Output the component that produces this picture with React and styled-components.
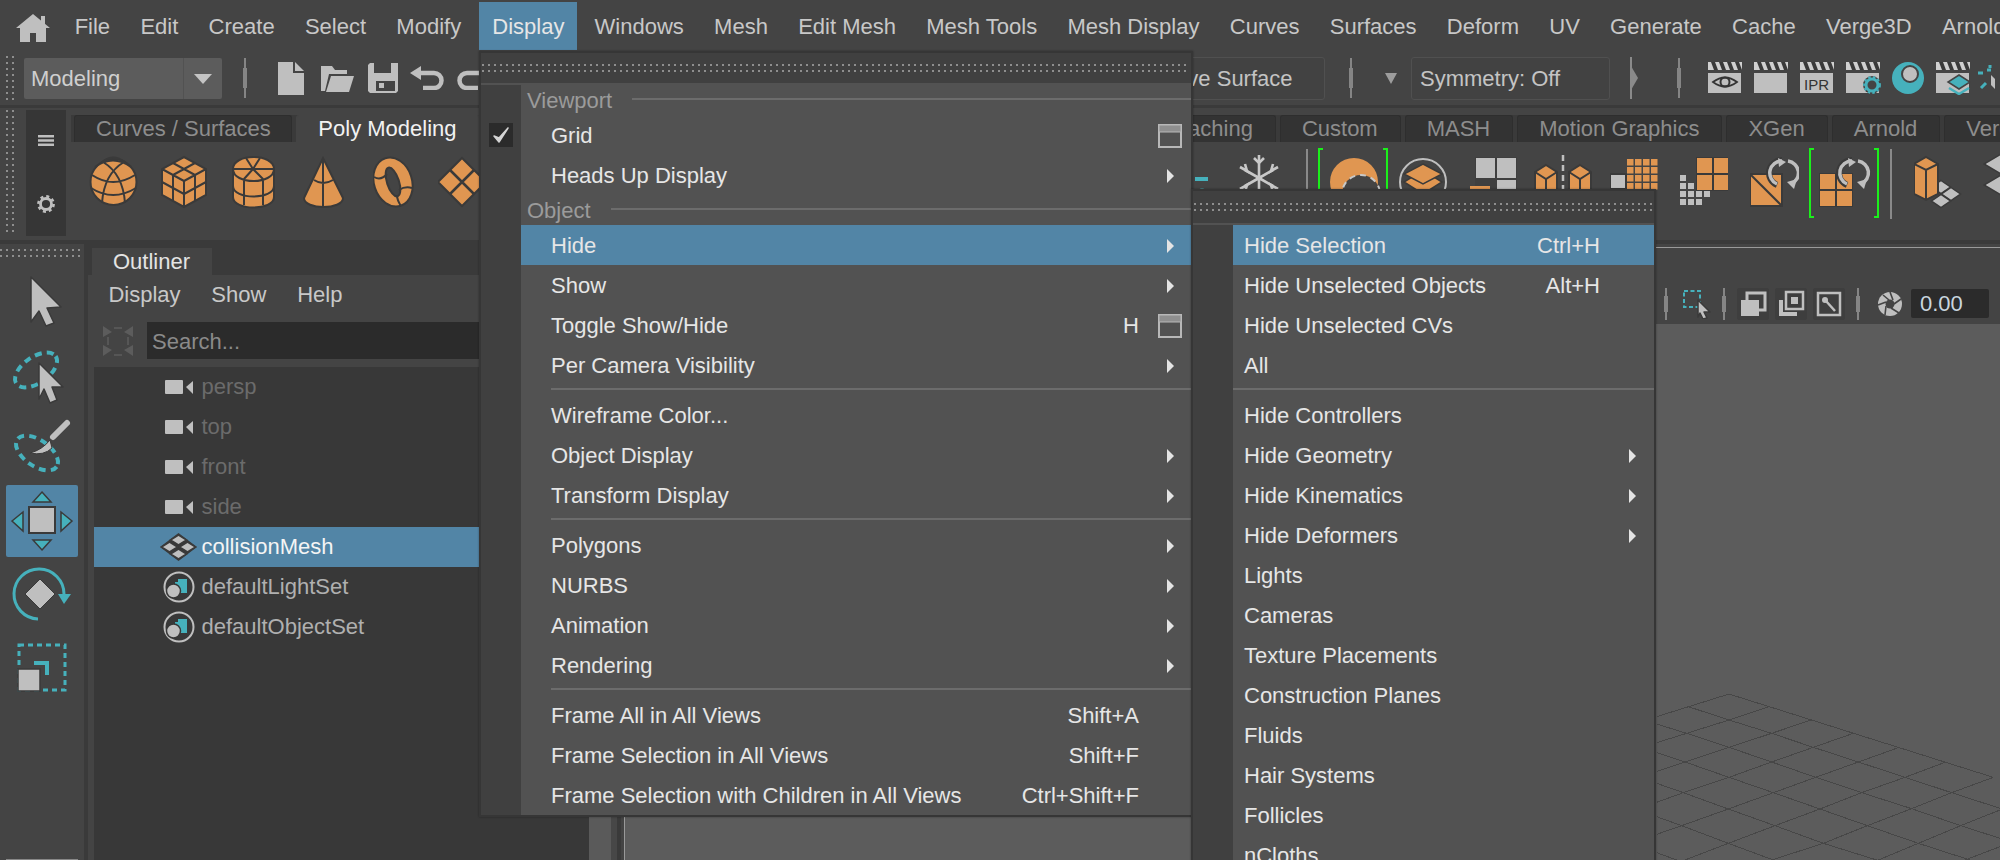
import React from 'react';
import styled, { createGlobalStyle } from 'styled-components';

const O = '#e09651', GR = '#bfbfbf', D = '#3a3a3a', T = '#46b1bc', BLUE = '#5285a6';

const Global = createGlobalStyle`
  html, body { margin: 0; padding: 0; background: #3a3a3a; }
  * { box-sizing: border-box; }
`;
const Page = styled.div`
  position: relative; width: 2000px; height: 860px; overflow: hidden;
  display: flex; flex-direction: column; background: #444;
  font: 22px/1 "Liberation Sans", Arial, sans-serif; color: #c8c8c8;
`;
const GlyphSvg = styled.svg`
  flex: none; display: block;
  margin-left: ${p => p.$ml || 0}px; margin-top: ${p => p.$mt || 0}px;
`;
const G = ({ w, h = 72, ml, mt, children }) => (
  <GlyphSvg $ml={ml} $mt={mt} width={w} height={h} viewBox={`0 0 ${w} ${h}`}>{children}</GlyphSvg>
);
const Dots = styled.div`
  flex: none;
  width: ${p => p.$w}; height: ${p => p.$h};
  margin-left: ${p => p.$ml || 0}px; margin-bottom: ${p => p.$mb || 0}px;
  background-image: radial-gradient(circle at 1px 1px, #8e8e8e 0.9px, transparent 1.1px);
  background-size: 6px 6px;
`;
const Handle = styled.div`
  flex: none; position: relative; width: 2px; height: ${p => p.$h || 40}px;
  margin-left: ${p => p.$ml || 0}px; background: #858585;
  &::before { content: ""; position: absolute; left: -1px; width: 4px; top: 25%; bottom: 25%; background: #858585; }
`;

/* ---------- menu bar ---------- */
const MenuBar = styled.div`
  height: 50px; flex: none; display: flex; align-items: stretch; padding-left: 16px; white-space: nowrap; overflow: hidden;
`;
const HomeWrap = styled.div`display: flex; align-items: flex-start; padding-top: 14px; margin-right: 9.5px;`;
const TopItem = styled.div`
  display: flex; align-items: center; padding: 4px 15.15px 0; flex: none;
  ${p => p.$active && `padding: 2px 12.5px 0 13px; margin: 2px 2.5px 0 3px; background: ${BLUE}; color: #e6e6e6;`}
`;

/* ---------- tool row ---------- */
const ToolRow = styled.div`height: 55px; flex: none; display: flex; align-items: center; white-space: nowrap;`;
const ModeBox = styled.div`
  display: flex; width: 198px; height: 41px; margin-left: 10px; margin-top: 2px; border-radius: 2px; background: #5c5c5c; overflow: hidden;
`;
const ModeLabel = styled.div`flex: 1; display: flex; align-items: center; padding-left: 7px; border-right: 1px solid #525252; color: #cfcfcf;`;
const ModeCaret = styled.div`width: 38px; display: flex; align-items: center; justify-content: center;`;
const Triangle = styled.div`
  flex: none; width: 0; height: 0; margin-left: ${p => p.$ml || 0}px;
  border-left: ${p => p.$s}px solid transparent; border-right: ${p => p.$s}px solid transparent;
  border-top: ${p => p.$t}px solid ${p => p.$c || '#c4c4c4'};
`;
const TopIcons = styled.div`flex: none; width: 243px; display: flex; align-items: center; overflow: hidden; margin-top: 1px;`;
const RightTools = styled.div`
  margin-left: auto; width: 873px; flex: none; display: flex; align-items: center; overflow: hidden; margin-top: 1px;
`;
const Field = styled.div`
  flex: none; width: ${p => p.$w}px; height: 43px; margin-left: ${p => p.$ml || 0}px;
  display: flex; align-items: center; padding: 2px 0 0 8px; border: 1px solid #505050; border-radius: 3px; color: #c4c4c4; background: #424242;
`;

/* ---------- shelf ---------- */
const Shelf = styled.div`
  height: 135px; flex: none; display: flex; border-top: 3px solid #3a3a3a; padding-top: 2px;
`;
const ShelfSide = styled.div`
  flex: none; width: 40px; height: 126px; margin-left: 12px; background: #363636;
  display: flex; flex-direction: column; align-items: center; justify-content: space-between; padding: 25px 0 23px;
`;
const ShelfMain = styled.div`flex: 1; min-width: 0; margin-left: 5px; padding-top: 5px; overflow: hidden;`;
const ShelfTabs = styled.div`
  height: 27px; display: flex; gap: 4px; padding-left: 3px; background: #3a3a3a; white-space: nowrap;
`;
const ShelfTab = styled.div`
  flex: none; display: flex; align-items: center; padding: 0 ${p => p.$pr ?? 22}px 0 21px;
  border: 1px solid ${p => (p.$active ? '#444' : '#2e2e2e')}; border-bottom: none; border-radius: 3px 3px 0 0;
  background: ${p => (p.$active ? '#444' : '#333')}; color: ${p => (p.$active ? '#f2f2f2' : '#8d8d8d')};
`;
const ShelfIcons = styled.div`display: flex; height: 98px; padding-top: 6px;`;
const ShelfLeft = styled.div`flex: none; width: 1122px; display: flex; padding-left: 18px;`;
const ShelfRight = styled.div`flex: none; width: 807px; display: flex; overflow: hidden;`;
const ShelfDivider = styled.div`
  flex: none; width: 2px; height: 70px; margin: 1px 0 0 ${p => p.$ml}px; background: #8a8a8a;
`;

/* ---------- workspace ---------- */
const Workspace = styled.div`flex: 1; min-height: 0; display: flex; background: #3a3a3a; padding-top: 4px;`;
const Toolbox = styled.div`
  flex: none; width: 84px; background: #444; padding-top: 5px; display: flex; flex-direction: column;
`;
const ToolBtn = styled.div`
  flex: none; width: 72px; height: 72px; margin: 0 0 1px 6px; border-radius: 2px;
  background: ${p => (p.$active ? BLUE : 'transparent')};
`;
const ToolEnd = styled.div`margin: auto 6px 0; height: 1px; flex: none; background: #888;`;
const Outliner = styled.div`flex: none; width: 501px; margin-left: 4px; display: flex; flex-direction: column;`;
const PanelTabs = styled.div`flex: none; height: 31px; padding: 4px 0 0 4px; display: flex;`;
const PanelTab = styled.div`
  width: 120px; display: flex; align-items: center; padding-left: 21px; background: #444; color: #e4e4e4;
`;
const OutlinerBody = styled.div`flex: 1; min-height: 0; background: #444; display: flex; flex-direction: column;`;
const OutlinerMenu = styled.div`height: 47px; flex: none; display: flex; align-items: center; padding: 0 0 8px 20.4px; gap: 30.8px;`;
const SearchRow = styled.div`height: 37px; flex: none; display: flex; padding-left: 15px;`;
const SearchBox = styled.div`
  flex: 1; margin-left: 14px; background: #2b2b2b; display: flex; align-items: center; padding: 2px 0 0 5px; color: #8a8a8a;
`;
const List = styled.div`flex: 1; margin: 8px 0 0 6px; background: #383838;`;
const ListRow = styled.div`
  height: 40px; display: flex; align-items: center; padding-left: 66px;
  color: ${p => p.$c}; background: ${p => (p.$active ? BLUE : 'transparent')};
`;
const ListLabel = styled.span`margin-left: 4.5px;`;
const Splitter = styled.div`
  flex: none; width: 35px;
  background: linear-gradient(90deg, #5a5a5a 0 22px, #474747 22px 28px, #3a3a3a 28px 32px, #444 32px);
`;
const ViewPanel = styled.div`flex: 1; min-width: 0; display: flex; flex-direction: column; background: #444; border-left: 1px solid #999;`;
const ViewHead = styled.div`
  flex: none; height: 77px; margin-top: 3px; border-top: 1px solid #999; padding: 39px 0 0 1031px;
`;
const ViewTools = styled.div`display: flex; align-items: center; height: 33px; width: 345px; overflow: hidden;`;
const ViewBtn = styled.div`
  flex: none; width: 32px; height: 32px; margin-left: ${p => p.$ml}px; background: #3e3e3e; border-radius: 2px;
`;
const ValueBox = styled.div`
  flex: none; width: 78px; height: 29px; margin-left: 8px; background: #2b2b2b; border-radius: 2px; color: #c9d6df;
  display: flex; align-items: center; padding-left: 9px;
`;
const Viewport = styled.div`position: relative; flex: 1; min-height: 0; background: #5c5c5c; overflow: hidden;`;
const GridSvg = styled.svg`position: absolute; right: 0; bottom: 0;`;

/* ---------- floating menus ---------- */
const FloatMenu = styled.div`
  position: absolute; left: ${p => p.$x}px; top: ${p => p.$y}px; width: ${p => p.$w}px;
  border: 2px solid #363636; background: #525252; color: #e6e6e6;
  box-shadow: 0 0 2px rgba(0,0,0,.35); white-space: nowrap;
`;
const MenuTitle = styled.div`
  height: ${p => p.$h}px; margin-bottom: 2px; background: #404040; padding: 0 1px; display: flex; align-items: center;
`;
const RowWrap = styled.div`display: flex; height: ${p => p.$h || 40}px;`;
const Gutter = styled.div`flex: none; width: 40px; background: #404040; display: flex; align-items: center; padding-left: 8px;`;
const RowMain = styled.div`
  flex: 1; min-width: 0; display: flex; align-items: center; padding: 1px 0 0 ${p => p.$pad}px;
  background: ${p => (p.$active ? BLUE : 'transparent')};
`;
const RowLabel = styled.span`flex: 1;`;
const RowSlot = styled.div`flex: none; width: ${p => p.$w}px; display: flex; justify-content: flex-end; align-items: center;`;
const Arrow = styled.div`
  width: 0; height: 0; margin-right: ${p => p.$mr}px;
  border-top: 7px solid transparent; border-bottom: 7px solid transparent; border-left: 7px solid #e4e4e4;
`;
const SectionMain = styled.div`flex: 1; display: flex; align-items: center; padding: 1px 0 0 6px; color: #9b9b9b;`;
const SectionLine = styled.div`flex: 1; height: 2px; margin: -3px 0 0 20px; background: #6c6c6c;`;
const DividerLine = styled.div`flex: 1; height: 2px; margin: 3px 0 0 ${p => p.$inset}px; background: #6c6c6c;`;

const Win = () => (
  <G w={33} h={24}><rect x="1" y="1" width="22" height="22" fill="none" stroke="#b8b8b8" strokeWidth="2" /><rect x="1" y="1" width="22" height="7" fill="#8f8f8f" stroke="#b8b8b8" strokeWidth="1" /></G>
);
const Check = () => (
  <G w={24} h={24}><rect width="24" height="24" fill="#2b2b2b" /><path d="M5 13l5 6 9-14-9 10z" fill="#d4d4d4" stroke="#d4d4d4" strokeWidth="1.5" strokeLinejoin="round" /></G>
);

const MenuRow = ({ label, sc, arrow, win, check, active, pad }) => {
  const sub = pad < 20;
  return (
    <RowWrap>
      <Gutter>{check && <Check />}</Gutter>
      <RowMain $active={active} $pad={pad}>
        <RowLabel>{label}</RowLabel>
        {sc && <span>{sc}</span>}
        <RowSlot $w={sub ? 54 : 52}>{arrow && <Arrow $mr={sub ? 18 : 17} />}{win && <Win />}</RowSlot>
      </RowMain>
    </RowWrap>
  );
};
const Section = ({ label }) => (
  <RowWrap $h={30}><Gutter /><SectionMain>{label}<SectionLine /></SectionMain></RowWrap>
);
const Divider = ({ inset }) => (
  <RowWrap $h={10}><Gutter /><DividerLine $inset={inset} /></RowWrap>
);

const Clapper = ({ ml, children }) => (
  <G w={36} h={34} ml={ml}>
    <rect x="1" y="1" width="34" height="8" fill="#d0d0d0" />
    <path d="M4 1h4l3 8H7zM12 1h4l3 8h-4zM20 1h4l3 8h-4zM28 1h4l3 8h-4z" fill="#3a3a3a" />
    <rect x="1" y="12" width="33" height="20" fill={GR} />
    {children}
  </G>
);
const Cycle = ({ x, y }) => (
  <g transform={`translate(${x} ${y})`} fill="none" stroke="#3a3a3a">
    <path d="M13 2A13 13 0 0 0 8 27" stroke="#3a3a3a" strokeWidth="6" />
    <path d="M13 3A12 12 0 0 0 8 26" stroke={GR} strokeWidth="3.5" />
    <path d="M19 3A12 12 0 0 1 22 26" stroke={GR} strokeWidth="3.5" />
    <path d="M9 0l8 4-7 5z" fill={GR} stroke="none" />
    <path d="M18 24l10-3-3 10z" fill={GR} stroke="none" />
  </g>
);
const Brackets = () => (
  <path d="M5 1H1V69H5M65 1H69V69H65" fill="none" stroke="#1bf01b" strokeWidth="2" />
);
const Grid2 = ({ x, y, s = 32, fill = O }) => (
  <g transform={`translate(${x} ${y})`}>
    <rect x="-1" y="-1" width={s + 2} height={s + 2} fill="#3a3a3a" />
    <rect width={s / 2 - 1} height={s / 2 - 1} fill={fill} />
    <rect x={s / 2 + 1} width={s / 2 - 1} height={s / 2 - 1} fill={fill} />
    <rect y={s / 2 + 1} width={s / 2 - 1} height={s / 2 - 1} fill={fill} />
    <rect x={s / 2 + 1} y={s / 2 + 1} width={s / 2 - 1} height={s / 2 - 1} fill={fill} />
  </g>
);
const Dia = ({ cx, cy, rx, ry, fill = O }) => (
  <path d={`M${cx} ${cy - ry}L${cx + rx} ${cy}L${cx} ${cy + ry}L${cx - rx} ${cy}Z`} fill={fill} stroke={D} strokeWidth="1.5" />
);
const Cam = () => (
  <G w={37} h={40}><rect x="5" y="13" width="18" height="14" fill={GR} rx="1" /><path d="M26 20l7-6v13z" fill={GR} /></G>
);
const SetIcon = () => (
  <G w={37} h={40}>
    <circle cx="19" cy="20" r="14.5" fill="none" stroke={GR} strokeWidth="2" />
    <rect x="18" y="12" width="9" height="14" fill={T} />
    <path d="M15 15h6v6h-6z" fill={T} />
    <circle cx="13.5" cy="24" r="7" fill={GR} stroke="#383838" strokeWidth="1.5" />
  </G>
);
const MeshIcon = () => (
  <G w={37} h={40}>
    <path d="M18.5 6L37 20 18.5 34 0 20Z" fill="#383838" />
    <Dia cx={18.5} cy={13} rx={8} ry={5} fill={GR} />
    <Dia cx={9.5} cy={20} rx={8} ry={5} fill={GR} />
    <Dia cx={27.5} cy={20} rx={8} ry={5} fill={GR} />
    <Dia cx={18.5} cy={27} rx={8} ry={5} fill={GR} />
  </G>
);
const Cursor = ({ pts }) => <polygon points={pts} fill={GR} stroke={D} strokeWidth="1.5" strokeLinejoin="round" />;

const gridLines = [
  [[20,140],[237,72],[1030,322]],
  [[115,110],[237,150],[365,190],[490,232],[625,276],[765,322],[905,368],[1050,415]],
  [[20,162],[110,190],[237,232],[365,276],[497,322],[635,368],[785,416],[932,467],[1050,505]],
  [[20,248],[105,276],[237,322],[370,368],[510,417],[652,467],[805,520],[960,570]],
  [[20,340],[100,368],[235,417],[375,467],[520,520],[680,570]],
  [[20,440],[95,467],[235,520],[370,570]],
  [[20,548],[80,570]],
  [[20,218],[110,190],[237,150],[357,110]],
  [[20,304],[105,276],[237,232],[365,190],[483,150]],
  [[20,397],[100,368],[237,322],[365,276],[490,232],[610,190]],
  [[20,493],[95,467],[235,417],[370,368],[497,322],[625,276],[745,233]],
  [[105,570],[235,520],[375,467],[510,417],[635,368],[765,322],[885,277]],
  [[365,570],[520,520],[652,467],[785,416],[905,368],[1030,322]],
  [[685,570],[805,520],[932,467],[1050,420]],
  [[945,570],[1050,530]],
];

const topItems = ['File','Edit','Create','Select','Modify','Display','Windows','Mesh','Edit Mesh','Mesh Tools','Mesh Display','Curves','Surfaces','Deform','UV','Generate','Cache','Verge3D','Arnold'];
const tabs = [['Curves / Surfaces',0,20.5],['Poly Modeling',1],['Sculpting'],['Rigging'],['Animation'],['Rendering'],['FX',0,16.8],['FX Caching'],['Custom'],['MASH'],['Motion Graphics'],['XGen'],['Arnold'],['Verge3D']];
const subRows = [
  ['Hide Geometry',1],['Hide Kinematics',1],['Hide Deformers',1],['Lights'],['Cameras'],['Texture Placements'],['Construction Planes'],['Fluids'],['Hair Systems'],['Follicles'],['nCloths'],
];

export default function App() {
  return (
    <Page>
      <Global />
      <MenuBar>
        <HomeWrap>
          <G w={34} h={28}>
            <path d="M17 0L34 14H30V28H20V19H14V28H4V14H0Z" fill={GR} />
            <rect x="25" y="2" width="4" height="8" fill={GR} />
          </G>
        </HomeWrap>
        {topItems.map(t => <TopItem key={t} $active={t === 'Display'}>{t}</TopItem>)}
      </MenuBar>

      <ToolRow>
        <Dots $w="8px" $h="44px" $ml={6} />
        <ModeBox>
          <ModeLabel>Modeling</ModeLabel>
          <ModeCaret><Triangle $s={9} $t={10} /></ModeCaret>
        </ModeBox>
        <Handle $ml={22} $h={40} />
        <TopIcons>
          <G w={27} h={34} ml={32}>
            <path d="M0 1H15V12H26V34H0Z" fill={GR} /><path d="M17 1L26 10H17Z" fill={GR} />
          </G>
          <G w={34} h={30} ml={15}>
            <path d="M1 28V3H12L15 7H27V11H9L5 28Z" fill={GR} /><path d="M11 13H34L29 29H6Z" fill={GR} />
          </G>
          <G w={31} h={32} ml={13}>
            <path d="M3 1H31V29L29 31H3L1 29V3Z" fill={GR} /><rect x="7" y="1" width="17" height="10" fill="#444" />
            <rect x="9" y="19" width="19" height="10" fill="#444" /><rect x="12" y="21" width="5" height="5" fill={GR} />
          </G>
          <G w={34} h={24} ml={12}>
            <path d="M0 7L11 0V14Z" fill={GR} /><path d="M9 7H24A7.5 7.5 0 0 1 24 22H13" fill="none" stroke={GR} strokeWidth="4.5" />
          </G>
          <G w={34} h={24} ml={13}>
            <path d="M34 7L23 0V14Z" fill={GR} /><path d="M25 7H10A7.5 7.5 0 0 0 10 22H21" fill="none" stroke={GR} strokeWidth="4.5" />
          </G>
        </TopIcons>
        <RightTools>
          <Field $w={198}>No Live Surface</Field>
          <Handle $ml={25} />
          <Triangle $ml={33} $s={6} $t={11} $c="#9d9d9d" />
          <Field $w={199} $ml={14}>Symmetry: Off</Field>
          <G w={10} h={42} ml={20}>
            <path d="M1 0V42" stroke="#8a8a8a" strokeWidth="2" /><path d="M1 9L8 21 1 33Z" fill="#8a8a8a" />
          </G>
          <Handle $ml={38} />
          <Clapper ml={27}>
            <path d="M6 21q12-9 24 0q-12 9-24 0z" fill={GR} stroke="#333" strokeWidth="1.8" /><circle cx="18" cy="21" r="4.5" fill="none" stroke="#333" strokeWidth="2" />
          </Clapper>
          <Clapper ml={10} />
          <Clapper ml={10}>
            <text x="5" y="29" fontFamily="Liberation Sans" fontSize="15" fill="#333">IPR</text>
          </Clapper>
          <Clapper ml={10}>
            <circle cx="27" cy="24" r="9" fill="#444" /><circle cx="27" cy="24" r="6" fill="none" stroke={T} strokeWidth="3" /><circle cx="27" cy="24" r="8" fill="none" stroke={T} strokeWidth="1.8" strokeDasharray="2.5 2.3" />
          </Clapper>
          <G w={34} h={34} ml={10}>
            <ellipse cx="17" cy="17" rx="16" ry="16" fill={T} /><circle cx="19" cy="13" r="8" fill={GR} stroke="#444" strokeWidth="2" />
          </G>
          <Clapper ml={10}>
            <path d="M24 14l11 7-11 7-11-7z" fill={T} stroke="#444" strokeWidth="1.5" /><path d="M14 27l10 6 10-6" fill="none" stroke={T} strokeWidth="2.5" />
          </Clapper>
          <G w={17} h={34} ml={7}>
            <path d="M0 12h5M9 9h4M8 22L3 27M12 4v3" stroke={T} strokeWidth="3" /><path d="M13 14l4 4v10l-4-4z" fill={GR} />
          </G>
        </RightTools>
      </ToolRow>

      <Shelf>
        <Dots $w="8px" $h="126px" $ml={6} />
        <ShelfSide>
          <G w={16} h={11}><path d="M0 1.3H16M0 5.5H16M0 9.7H16" stroke={GR} strokeWidth="2.4" /></G>
          <G w={18} h={18}>
            <circle cx="9" cy="9" r="5.5" fill="none" stroke={GR} strokeWidth="2.8" />
            <circle cx="9" cy="9" r="7.6" fill="none" stroke={GR} strokeWidth="2.6" strokeDasharray="3 2.97" />
          </G>
        </ShelfSide>
        <ShelfMain>
          <ShelfTabs>
            {tabs.map(([t, a, p]) => <ShelfTab key={t} $active={a} $pr={p}>{t}</ShelfTab>)}
          </ShelfTabs>
          <ShelfIcons>
            <ShelfLeft>
              <G w={49}>
                <g fill="none" stroke={D} strokeWidth="2">
                  <circle cx="24.5" cy="34" r="23" fill={O} />
                  <path d="M3 27Q24 41 46 27M2 40Q24 54 47 40M6 19Q24 6 42 19M14 14Q34 26 36 55M35 14Q15 26 13 55M13 14Q24 5 36 14" />
                </g>
              </G>
              <G w={46} ml={23}>
                <g stroke={D} strokeWidth="2" fill={O}>
                  <path d="M23 9L45 21V47L23 59 1 47V21Z" /><path d="M1 21L23 33 45 21M23 33V59M12 15L34 27M34 15L12 27M12 27V53M34 27V53M1 34L23 46 45 34" fill="none" />
                </g>
              </G>
              <G w={43} ml={25}>
                <g stroke={D} strokeWidth="2" fill={O}>
                  <path d="M1 21V49C1 63 42 63 42 49V21C42 5 1 5 1 21Z" />
                  <path d="M1 21C1 37 42 37 42 21M1 38C1 52 42 52 42 38M12 31V57M31 31V57M21 21L12 31M21 21L31 31M21 21H1M21 21H42M21 21L14 10M21 21L28 10" fill="none" />
                </g>
              </G>
              <G w={41} ml={28}>
                <g stroke={D} strokeWidth="2" fill={O}>
                  <path d="M20 10L40 50C40 62 1 62 1 50Z" /><path d="M20 10V59M11 32Q20 38 30 32" fill="none" />
                </g>
              </G>
              <G w={41} ml={29}>
                <g stroke={D} strokeWidth="2" fill={O}>
                  <ellipse cx="20" cy="34" rx="19" ry="25" transform="rotate(-18 20 34)" />
                  <ellipse cx="20" cy="34" rx="6" ry="15" transform="rotate(-18 20 34)" fill="#444" />
                  <path d="M1 29Q8 33 14 26M26 42Q32 38 39 40M28 58Q24 52 24 47" fill="none" />
                </g>
              </G>
              <G w={50} ml={24}>
                <path d="M24 10L48 34 24 58 0 34Z" fill={O} stroke={D} strokeWidth="2" /><path d="M12 22L36 46M36 22L12 46" stroke={D} strokeWidth="2.5" />
              </G>
            </ShelfLeft>
            <ShelfRight>
              <G w={22}>
                <rect x="2" y="29" width="13" height="4" fill={T} />
                <path d="M3 44a7 7 0 0 1 12 0z" fill={T} />
              </G>
              <G w={44} ml={22}>
                <g stroke="#c8c8c8" strokeWidth="2.6" fill="none">
                  <path d="M22 7V30L8 22M22 30L36 22M22 30L8 38M22 30L36 38M22 30V50" />
                  <path d="M17 10L22 15 27 10M3 19L10 23 8 16M41 19L34 23 36 16M3 41L10 37 8 44M41 41L34 37 36 44" />
                </g>
              </G>
              <ShelfDivider $ml={25} />
              <G w={70} ml={10}>
                <Brackets />
                <circle cx="36" cy="34" r="24" fill={O} />
                <circle cx="43" cy="46" r="19" fill="#444" stroke="#c8c8c8" strokeWidth="2" strokeDasharray="6 5" />
              </G>
              <G w={48} ml={11}>
                <circle cx="24" cy="34" r="23" fill="none" stroke={GR} strokeWidth="2" />
                <Dia cx={24} cy={34} rx={19} ry={12} />
                <Dia cx={24} cy={26} rx={19} ry={10} />
              </G>
              <G w={47} ml={23}>
                <path d="M5 9H47V55H5Z" fill="#3a3a3a" opacity=".5" />
                <rect x="6" y="10" width="19" height="20" fill={GR} /><rect x="27" y="10" width="19" height="20" fill={GR} />
                <rect x="27" y="32" width="19" height="20" fill={GR} /><rect x="0" y="38" width="20" height="14" fill={O} />
              </G>
              <G w={58} ml={17}>
                <path d="M29 7V50" stroke={GR} strokeWidth="2.5" strokeDasharray="6 4" />
                <g stroke={D} strokeWidth="2" fill={O}>
                  <path d="M12 17L23 24V60H1V24Z" /><path d="M1 24L12 31 23 24M12 31V60" fill="none" />
                  <path d="M46 17L57 24V60H35V24Z" /><path d="M35 24L46 31 57 24M46 31V60" fill="none" />
                </g>
              </G>
              <G w={48} ml={18}>
                <rect x="0" y="26" width="16" height="15" fill={GR} stroke={D} strokeWidth="2" />
                {[0,1,2,3].map(c => [0,1,2,3].map(r => (
                  <rect key={`${c}${r}`} x={17 + c * 8} y={11 + r * 8} width="6.5" height="6.5" fill={O} />
                )))}
              </G>
              <G w={48} ml={22}>
                {[0,1,2,3].map(c => [0,1,2,3].map(r => (
                  c + r < 6 && !(c >= 1 && r === 0) && !(c >= 2 && r === 1) ? <rect key={`${c}${r}`} x={c * 8} y={27 + r * 8} width="6" height="6" fill={GR} /> : null
                )))}
                <Grid2 x={17} y={10} />
              </G>
              <G w={49} ml={22}>
                <rect x="0" y="26" width="32" height="32" fill={O} stroke={D} strokeWidth="2" />
                <path d="M0 26L32 58" stroke={D} strokeWidth="2" />
                <Cycle x={19} y={10} />
              </G>
              <G w={70} ml={10}>
                <Brackets />
                <Grid2 x={11} y={26} />
                <Cycle x={30} y={10} />
              </G>
              <ShelfDivider $ml={11} />
              <G w={48} ml={22}>
                <Dia cx={27} cy={39} rx={9.5} ry={6.5} fill={GR} />
                <Dia cx={37} cy={46} rx={9.5} ry={6.5} fill={GR} />
                <Dia cx={27} cy={53} rx={9.5} ry={6.5} fill={GR} />
                <g stroke={D} strokeWidth="2" fill={O}>
                  <path d="M12 9L24 16V46L12 52 0 46V16Z" /><path d="M0 16L12 22 24 16M12 22V52" fill="none" />
                </g>
              </G>
              <G w={20} ml={21}>
                <Dia cx={18} cy={16} rx={17} ry={10} fill={GR} />
                <Dia cx={18} cy={37} rx={17} ry={10} fill={GR} />
              </G>
            </ShelfRight>
          </ShelfIcons>
        </ShelfMain>
      </Shelf>

      <Workspace>
        <Toolbox>
          <Dots $w="82px" $h="8px" $mb={9} />
          <ToolBtn>
            <G w={72}><Cursor pts="25,11 55,41 41,42 48,57 40,60 33,45 25,56" /></G>
          </ToolBtn>
          <ToolBtn>
            <G w={72}>
              <ellipse cx="30" cy="31" rx="24" ry="13" transform="rotate(-35 30 31)" fill="none" stroke={T} strokeWidth="4" strokeDasharray="7 5" />
              <Cursor pts="33,24 57,48 46,48 51,61 44,64 38,50 33,60" />
            </G>
          </ToolBtn>
          <ToolBtn>
            <G w={72}>
              <ellipse cx="31" cy="41" rx="24" ry="13" transform="rotate(35 31 41)" fill="none" stroke={T} strokeWidth="4" strokeDasharray="7 5" />
              <path d="M61 11L47 25" stroke={GR} strokeWidth="6" strokeLinecap="round" />
              <path d="M24 41Q36 38 44 28L46 36Q38 44 24 41Z" fill={GR} stroke={D} strokeWidth="1" />
            </G>
          </ToolBtn>
          <ToolBtn $active>
            <G w={72}>
              <rect x="23" y="22" width="26" height="26" fill={GR} stroke={D} strokeWidth="2" />
              <g fill={T} stroke={D} strokeWidth="1.5">
                <path d="M36 7L45 17H27Z" /><path d="M36 65L45 55H27Z" /><path d="M6 36L17 27V46Z" /><path d="M66 36L55 27V46Z" />
              </g>
            </G>
          </ToolBtn>
          <ToolBtn>
            <G w={72}>
              <path d="M32 61A25 25 0 1 1 58 36" fill="none" stroke={T} strokeWidth="3" />
              <path d="M52 36H65L58 46Z" fill={T} />
              <path d="M34 21L49 36 34 51 19 36Z" fill={GR} stroke={D} strokeWidth="1" />
            </G>
          </ToolBtn>
          <ToolBtn>
            <G w={72}>
              <rect x="13" y="14" width="46" height="45" fill="none" stroke={T} strokeWidth="3" strokeDasharray="5 4" />
              <path d="M28 32H41V44" fill="none" stroke={T} strokeWidth="4" />
              <rect x="12" y="38" width="22" height="22" fill={GR} stroke={D} strokeWidth="1.5" />
            </G>
          </ToolBtn>
          <ToolEnd />
        </Toolbox>

        <Outliner>
          <PanelTabs><PanelTab>Outliner</PanelTab></PanelTabs>
          <OutlinerBody>
            <OutlinerMenu><span>Display</span><span>Show</span><span>Help</span></OutlinerMenu>
            <SearchRow>
              <G w={30} h={37}>
                <g fill="#5c5c5c">
                  <path d="M0 4l9 6-9 5zM30 4l-9 6 9 5zM0 34l9-6-9-5zM30 34l-9-6 9-5z" />
                </g>
                <path d="M11 6H19M11 33H19M5 15V23M25 15V23" stroke="#5c5c5c" strokeWidth="1.5" />
              </G>
              <SearchBox>Search...</SearchBox>
            </SearchRow>
            <List>
              {['persp','top','front','side'].map(t => (
                <ListRow key={t} $c="#6b6b6b"><Cam /><ListLabel>{t}</ListLabel></ListRow>
              ))}
              <ListRow $active $c="#f4f4f4"><MeshIcon /><ListLabel>collisionMesh</ListLabel></ListRow>
              <ListRow $c="#b0b0b0"><SetIcon /><ListLabel>defaultLightSet</ListLabel></ListRow>
              <ListRow $c="#b0b0b0"><SetIcon /><ListLabel>defaultObjectSet</ListLabel></ListRow>
            </List>
          </OutlinerBody>
        </Outliner>
        <Splitter />
        <ViewPanel>
          <ViewHead>
            <ViewTools>
              <Handle $ml={9} $h={32} />
              <G w={28} h={30} ml={16}>
                <rect x="1" y="2" width="16" height="16" fill="none" stroke={T} strokeWidth="2" strokeDasharray="4 2.5" />
                <Cursor pts="15,11 27,23 21,23 24,29 20,30 17,24 15,28" />
              </G>
              <Handle $ml={12} $h={32} />
              <ViewBtn $ml={12}>
                <G w={32} h={32}><path d="M4 12H22V28H4Z" fill={GR} /><path d="M10 12V5H28V22H22" fill="none" stroke={GR} strokeWidth="3" /></G>
              </ViewBtn>
              <ViewBtn $ml={6}>
                <G w={32} h={32}><path d="M4 12V28H22V24H8V12Z" fill={GR} /><rect x="11" y="4" width="17" height="17" fill="none" stroke={GR} strokeWidth="2.5" /><rect x="16" y="9" width="7" height="7" fill={GR} /></G>
              </ViewBtn>
              <ViewBtn $ml={6}>
                <G w={32} h={32}><rect x="5" y="5" width="22" height="22" fill="none" stroke={GR} strokeWidth="2.5" /><circle cx="12" cy="12" r="3" fill={GR} /><path d="M13 13L22 23" stroke={GR} strokeWidth="2.5" /></G>
              </ViewBtn>
              <Handle $ml={12} $h={32} />
              <G w={26} h={26} ml={18}>
                <circle cx="13" cy="13" r="12" fill={GR} />
                <circle cx="13" cy="13" r="4.5" fill="#444" />
                <path d="M13 1L16 9M24 8L17 13M22 22L14 17M8 24L9 15M1 14L9 11M6 4L12 9" stroke="#444" strokeWidth="1.6" />
              </G>
              <ValueBox>0.00</ValueBox>
            </ViewTools>
          </ViewHead>
          <Viewport>
            <GridSvg width="345" height="190" viewBox="15 0 1035 570" shapeRendering="crispEdges">
              {gridLines.map((l, i) => (
                <polyline key={i} points={l.map(p => p.join(',')).join(' ')} fill="none" stroke="#474747" strokeWidth="3" />
              ))}
            </GridSvg>
          </Viewport>
        </ViewPanel>
      </Workspace>

      <FloatMenu $x={479} $y={51} $w={714}>
        <MenuTitle $h={30}><Dots $w="100%" $h="8px" /></MenuTitle>
        <Section label="Viewport" />
        <MenuRow pad={30} label="Grid" check win />
        <MenuRow pad={30} label="Heads Up Display" arrow />
        <Section label="Object" />
        <MenuRow pad={30} label="Hide" arrow active />
        <MenuRow pad={30} label="Show" arrow />
        <MenuRow pad={30} label="Toggle Show/Hide" sc="H" win />
        <MenuRow pad={30} label="Per Camera Visibility" arrow />
        <Divider inset={30} />
        <MenuRow pad={30} label="Wireframe Color..." />
        <MenuRow pad={30} label="Object Display" arrow />
        <MenuRow pad={30} label="Transform Display" arrow />
        <Divider inset={30} />
        <MenuRow pad={30} label="Polygons" arrow />
        <MenuRow pad={30} label="NURBS" arrow />
        <MenuRow pad={30} label="Animation" arrow />
        <MenuRow pad={30} label="Rendering" arrow />
        <Divider inset={30} />
        <MenuRow pad={30} label="Frame All in All Views" sc="Shift+A" />
        <MenuRow pad={30} label="Frame Selection in All Views" sc="Shift+F" />
        <MenuRow pad={30} label="Frame Selection with Children in All Views" sc="Ctrl+Shift+F" />
      </FloatMenu>

      <FloatMenu $x={1191} $y={189} $w={465}>
        <MenuTitle $h={32}><Dots $w="100%" $h="8px" /></MenuTitle>
        <MenuRow pad={11} label="Hide Selection" sc="Ctrl+H" active />
        <MenuRow pad={11} label="Hide Unselected Objects" sc="Alt+H" />
        <MenuRow pad={11} label="Hide Unselected CVs" />
        <MenuRow pad={11} label="All" />
        <Divider inset={0} />
        <MenuRow pad={11} label="Hide Controllers" />
        {subRows.map(([l, a]) => <MenuRow key={l} pad={11} label={l} arrow={a} />)}
      </FloatMenu>
    </Page>
  );
}
